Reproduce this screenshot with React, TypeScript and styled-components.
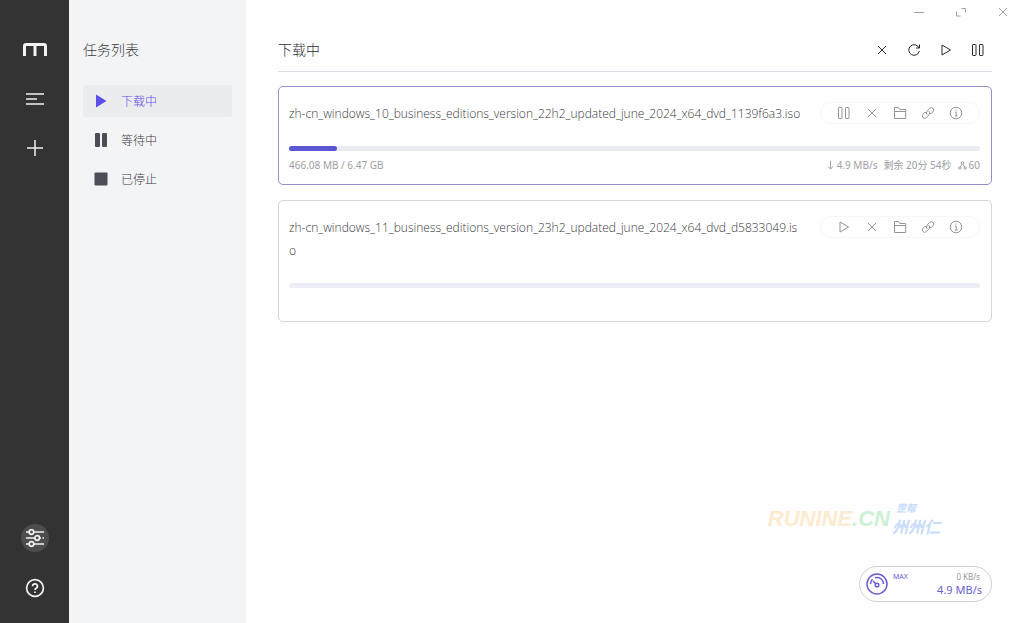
import React from "react";
import styled, { createGlobalStyle } from "styled-components";

const GlobalStyle = createGlobalStyle`
  *, *::before, *::after { box-sizing: border-box; }
  body {
    margin: 0;
    background: #fefefe;
    color: #3c3c3f;
    font-family: "Noto Sans", "Noto Sans CJK SC", sans-serif;
  }
  button { font: inherit; color: inherit; }
`;

const Shell = styled.div`
  display: flex;
  min-height: 100vh;
`;

const Rail = styled.nav`
  display: flex;
  flex-direction: column;
  align-items: center;
  flex: 0 0 69px;
  padding: 32px 0 21px;
  background: #333333;
  color: #f2f2f2;
`;

const IconButton = styled.button<{ $size?: number }>`
  display: grid;
  place-items: center;
  width: ${(p) => p.$size ?? 20}px;
  height: ${(p) => p.$size ?? 20}px;
  padding: 0;
  border: 0;
  background: none;
  cursor: pointer;
`;

const RailGroup = styled.div`
  display: flex;
  flex-direction: column;
  align-items: center;
  gap: 13px;

  & + & {
    margin-top: auto;
    gap: 22px;
  }
`;

const RoundButton = styled(IconButton)<{ $filled?: boolean }>`
  border-radius: 50%;
  background: ${(p) => (p.$filled ? "#4d4d4d" : "none")};
`;

const Side = styled.aside`
  flex: 0 0 177px;
  padding: 38px 14px 0;
  background: #f3f4f6;
`;

const Heading = styled.h2`
  margin: 0;
  font-size: 14px;
  line-height: 24px;
  font-weight: 300;
`;

const TaskFilters = styled.ul`
  display: grid;
  gap: 7px;
  margin: 23px 0 0;
  padding: 0;
  list-style: none;
`;

const FilterButton = styled.button<{ $active?: boolean }>`
  display: flex;
  align-items: center;
  gap: 13px;
  width: 100%;
  height: 32px;
  padding: 0 11px;
  border: 0;
  border-radius: 3px;
  background: ${(p) => (p.$active ? "#ebecee" : "none")};
  color: ${(p) => (p.$active ? "#5a4ee8" : "#3c3c3f")};
  font-size: 12px;
  font-weight: 300;
  text-align: left;
  cursor: pointer;
`;

const Main = styled.main`
  position: relative;
  display: flex;
  flex-direction: column;
  flex: 1;
  min-width: 0;
  padding: 0 32px 21px;
`;

const WindowBar = styled.div`
  display: flex;
  justify-content: flex-end;
  gap: 22px;
  height: 26px;
  padding-top: 2px;
  margin-right: -21px;
  color: #a2a2a4;
`;

const TitleBar = styled.header`
  display: flex;
  align-items: center;
  justify-content: space-between;
  height: 46px;
  padding-top: 3px;
  border-bottom: 1px solid #dcdde4;
  color: #2c2c2e;
`;

const TitleActions = styled.div`
  display: flex;
  gap: 12px;
  margin-right: 4px;
`;

const TaskList = styled.ul`
  display: grid;
  gap: 15px;
  margin: 14px 0 0;
  padding: 0;
  list-style: none;
`;

const TaskCard = styled.li<{ $active?: boolean }>`
  padding: 15px 11px 9px 10px;
  border: 1px solid ${(p) => (p.$active ? "#958fcb" : "#d5d5da")};
  border-radius: 5px;
`;

const TaskTop = styled.div`
  display: flex;
  justify-content: space-between;
  align-items: flex-start;
  gap: 16px;
`;

const TaskName = styled.div`
  flex: 1;
  max-width: 516px;
  font-family: "Open Sans", "Noto Sans CJK SC", sans-serif;
  font-size: 12px;
  font-weight: 300;
  line-height: 23px;
  color: #3c3c3f;
  word-break: break-all;
`;

const TaskActions = styled.div`
  display: flex;
  align-items: center;
  gap: 8px;
  height: 22px;
  padding: 0 13px;
  border: 1px solid #f7f7f9;
  border-radius: 12px;
  color: #949496;
`;

const Track = styled.div<{ $tint: string }>`
  height: 5px;
  margin-top: 21px;
  border-radius: 3px;
  background: ${(p) => p.$tint};
`;

const Fill = styled.div`
  height: 100%;
  border-radius: 3px;
  background: #5b57d2;
`;

const TaskStats = styled.div`
  display: flex;
  justify-content: space-between;
  height: 20px;
  margin-top: 4px;
  font-size: 10px;
  line-height: 20px;
  color: #a0a0a3;
`;

const Transfer = styled.div`
  display: flex;
  gap: 6px;
`;

const Stat = styled.span`
  display: flex;
  align-items: center;
  gap: 2px;
`;

const Watermark = styled.div`
  position: absolute;
  right: 84px;
  bottom: 86px;
  display: flex;
  align-items: center;
  font-family: "Liberation Sans", "Noto Sans CJK SC", sans-serif;
  font-style: italic;
  font-weight: 700;
  font-size: 22px;
  line-height: 28px;
  color: #fdebcf;
`;

const WatermarkDomain = styled.span`
  color: #cdf0d6;
`;

const WatermarkName = styled.span`
  display: grid;
  margin-left: 2px;
  font-family: "Noto Sans CJK SC", sans-serif;
  font-size: 16px;
  line-height: 22px;
  color: #c6dcf8;
`;

const WatermarkPrefix = styled.span`
  padding-left: 4px;
  font-size: 10px;
  line-height: 14px;
`;

const SpeedMeter = styled.button`
  display: flex;
  align-items: center;
  width: 133px;
  height: 36px;
  margin-top: auto;
  align-self: flex-end;
  padding: 0 9px 0 6px;
  border: 1px solid #d0d0d6;
  border-radius: 18px;
  background: #fefefe;
  color: #6a60d0;
  cursor: pointer;
`;

const SpeedMode = styled.span`
  align-self: flex-start;
  margin: 4px auto 0 5px;
  font-size: 7px;
  line-height: 12px;
`;

const SpeedValues = styled.span`
  display: grid;
  justify-items: end;
  font-size: 11px;
  line-height: 14px;
`;

const UploadSpeed = styled.span`
  padding-right: 2px;
  font-size: 8px;
  line-height: 12px;
  color: #99999c;
`;

type GlyphProps = { size?: number; weight?: number; children: React.ReactNode };

const Glyph = ({ size = 14, weight = 1, children }: GlyphProps) => (
  <svg width={size} height={size} viewBox={`0 0 ${size} ${size}`} fill="none" stroke="currentColor" strokeWidth={weight} aria-hidden="true">
    {children}
  </svg>
);

const CloseGlyph = () => <Glyph><path d="M3 3l8 8M11 3l-8 8" /></Glyph>;
const PauseGlyph = () => <Glyph><rect x="1.5" y="1.5" width="3.5" height="11" rx=".6" /><rect x="8.5" y="1.5" width="3.5" height="11" rx=".6" /></Glyph>;
const PlayGlyph = () => <Glyph><path d="M3 2l8.5 5L3 12z" strokeLinejoin="round" /></Glyph>;
const FolderGlyph = () => <Glyph><path d="M1.500 12.500v-11h4l1.200 2h6v9zM1.500 5.500h11" /></Glyph>;
const LinkGlyph = () => (
  <Glyph>
    <path d="M6.200 8.800A2.600 2.600 0 0 1 6 5.200L8.600 2.400A2.400 2.400 0 0 1 12 5.800L10.400 7.500H9" />
    <path d="M7.800 5.200A2.600 2.600 0 0 1 8 8.800L5.400 11.600A2.400 2.400 0 0 1 2 8.200L3.600 6.500H5" />
  </Glyph>
);
const InfoGlyph = () => <Glyph><circle cx="7" cy="7" r="5.800" /><path d="M6 6.200H7.200V10M5.800 10h2.800M7 3.500v1.200" /></Glyph>;

type Task = { name: string; active: boolean; tint: string; percent: number };

const tasks: Task[] = [
  { name: "zh-cn_windows_10_business_editions_version_22h2_updated_june_2024_x64_dvd_1139f6a3.iso", active: true, tint: "#e9edf1", percent: 7 },
  { name: "zh-cn_windows_11_business_editions_version_23h2_updated_june_2024_x64_dvd_d5833049.iso", active: false, tint: "#ededf8", percent: 0 },
];

const TaskItem = ({ task }: { task: Task }) => (
  <TaskCard $active={task.active}>
    <TaskTop>
      <TaskName>{task.name}</TaskName>
      <TaskActions>
        <IconButton aria-label={task.active ? "暂停" : "开始"}>{task.active ? <PauseGlyph /> : <PlayGlyph />}</IconButton>
        <IconButton aria-label="删除"><CloseGlyph /></IconButton>
        <IconButton aria-label="打开文件夹"><FolderGlyph /></IconButton>
        <IconButton aria-label="复制链接"><LinkGlyph /></IconButton>
        <IconButton aria-label="详情"><InfoGlyph /></IconButton>
      </TaskActions>
    </TaskTop>
    <Track $tint={task.tint}>{task.percent > 0 && <Fill style={{ width: `${task.percent}%` }} />}</Track>
    <TaskStats>
      {task.active && (
        <>
          <span>466.08 MB / 6.47 GB</span>
          <Transfer>
            <Stat>
              <Glyph size={9}><path d="M4.500 0v8M2 5.500l2.500 2.500L7 5.500" /></Glyph>
              4.9 MB/s
            </Stat>
            <Stat>剩余 20分 54秒</Stat>
            <Stat>
              <Glyph size={9}><circle cx="4.500" cy="2" r="1.300" /><circle cx="1.800" cy="7" r="1.200" /><circle cx="7.200" cy="7" r="1.200" /><path d="M4 3.300L2.300 6M5 3.300L6.700 6" /></Glyph>
              60
            </Stat>
          </Transfer>
        </>
      )}
    </TaskStats>
  </TaskCard>
);

const App = () => (
  <>
    <GlobalStyle />
    <Shell>
      <Rail>
        <RailGroup>
          <RoundButton $size={36} aria-label="Motrix">
            <svg width="26" height="16" viewBox="0 0 26 16" fill="none" stroke="currentColor" strokeWidth="3" aria-hidden="true">
              <path d="M2.500 14V4Q2.500 2.500 4 2.500H22Q23.500 2.500 23.500 4V14M13 2.500V14" />
            </svg>
          </RoundButton>
          <RoundButton $size={36} aria-label="任务列表">
            <svg width="18" height="14" viewBox="0 0 18 14" fill="none" stroke="currentColor" strokeWidth="1.500" aria-hidden="true">
              <path d="M0 2h18M0 7h11M0 12h18" />
            </svg>
          </RoundButton>
          <RoundButton $size={36} aria-label="新建任务">
            <Glyph size={16} weight={1.500}><path d="M8 0v16M0 8h16" /></Glyph>
          </RoundButton>
        </RailGroup>
        <RailGroup>
          <RoundButton $size={28} $filled aria-label="设置">
            <Glyph size={18} weight={1.700}>
              <path d="M0 3h3M8 3h10M0 9h8.500M14 9h1M16.500 9h1.500M0 15h3M8 15h10" />
              <circle cx="5.500" cy="3" r="2.300" /><circle cx="11.200" cy="9" r="2.300" /><circle cx="5.500" cy="15" r="2.300" />
            </Glyph>
          </RoundButton>
          <RoundButton $size={28} aria-label="帮助">
            <Glyph size={20} weight={1.700}>
              <circle cx="10" cy="10" r="8.400" />
              <path d="M7.600 8.300a2.400 2.400 0 1 1 3.600 2Q10 11 10 12M10 13.400v1.500" />
            </Glyph>
          </RoundButton>
        </RailGroup>
      </Rail>

      <Side>
        <Heading>任务列表</Heading>
        <TaskFilters>
          <li>
            <FilterButton $active>
              <svg width="14" height="14" fill="currentColor" aria-hidden="true"><path d="M2 .500L12.500 7 2 13.500z" /></svg>
              下载中
            </FilterButton>
          </li>
          <li>
            <FilterButton>
              <svg width="14" height="14" fill="#4d4d57" aria-hidden="true"><rect x="1" y="0" width="5" height="14" rx="1" /><rect x="8" y="0" width="5" height="14" rx="1" /></svg>
              等待中
            </FilterButton>
          </li>
          <li>
            <FilterButton>
              <svg width="14" height="14" fill="#4d4d57" aria-hidden="true"><rect x="0.500" y="0.500" width="13" height="13" rx="1" /></svg>
              已停止
            </FilterButton>
          </li>
        </TaskFilters>
      </Side>

      <Main>
        <WindowBar>
          <IconButton aria-label="最小化"><Glyph size={10}><path d="M0 5.500h10" /></Glyph></IconButton>
          <IconButton aria-label="最大化"><Glyph size={10}><path d="M5.500 1.500h4v4M.500 4.500v4.500h4" /></Glyph></IconButton>
          <IconButton aria-label="关闭"><Glyph size={10}><path d="M1 1l8 8M9 1l-8 8" /></Glyph></IconButton>
        </WindowBar>
        <TitleBar>
          <Heading as="h1">下载中</Heading>
          <TitleActions>
            <IconButton aria-label="删除选中"><CloseGlyph /></IconButton>
            <IconButton aria-label="刷新">
              <Glyph><path d="M12 5A5.300 5.300 0 1 0 12.300 8M12.500 1.500V5H9" /></Glyph>
            </IconButton>
            <IconButton aria-label="全部开始"><PlayGlyph /></IconButton>
            <IconButton aria-label="全部暂停"><PauseGlyph /></IconButton>
          </TitleActions>
        </TitleBar>
        <TaskList>
          {tasks.map((task) => <TaskItem key={task.name} task={task} />)}
        </TaskList>
        <Watermark>
          RUNINE<WatermarkDomain>.CN</WatermarkDomain>
          <WatermarkName><WatermarkPrefix>罡帮</WatermarkPrefix><span>州州仁</span></WatermarkName>
        </Watermark>
        <SpeedMeter aria-label="限速">
          <Glyph size={22} weight={1.500}>
            <circle cx="11" cy="11" r="10" />
            <path d="M4.500 11a6.500 6.500 0 0 1 2-4.700M9 4.800a6.500 6.500 0 0 1 8.500 6.200M7 8l2.500 2.500" />
            <circle cx="11" cy="12" r="1.800" />
          </Glyph>
          <SpeedMode>MAX</SpeedMode>
          <SpeedValues>
            <UploadSpeed>0 KB/s</UploadSpeed>
            <span>4.9 MB/s</span>
          </SpeedValues>
        </SpeedMeter>
      </Main>
    </Shell>
  </>
);

export default App;
